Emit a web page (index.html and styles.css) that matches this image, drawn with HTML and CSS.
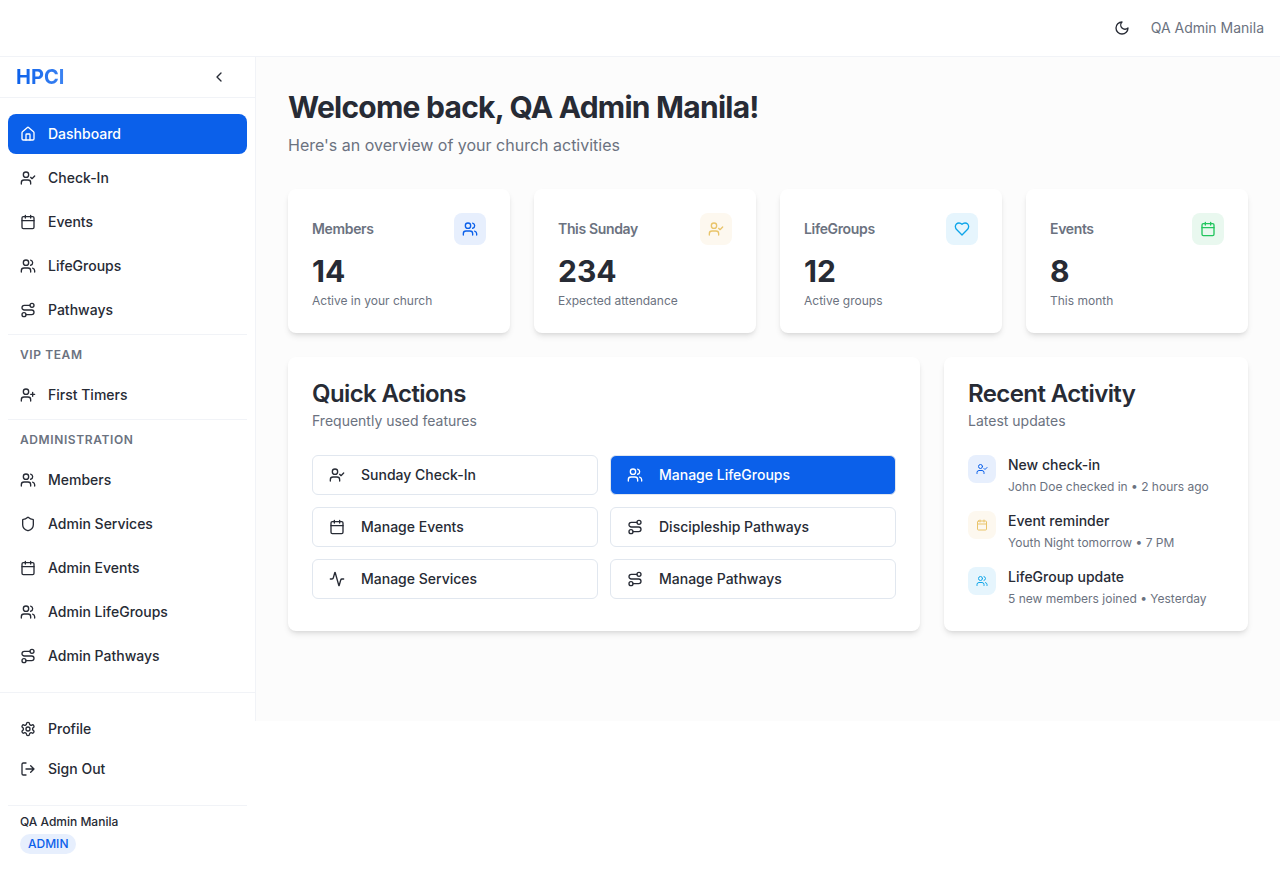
FILE: index.html
```html
<!DOCTYPE html>
<html lang="en">
<head>
<meta charset="utf-8">
<title>HPCI Dashboard</title>
<link rel="stylesheet" href="styles.css">
</head>
<body>
<svg class="sprite" aria-hidden="true">
  <symbol id="home" viewBox="0 0 24 24"><path d="M15 21v-8a1 1 0 0 0-1-1h-4a1 1 0 0 0-1 1v8"/><path d="M3 10a2 2 0 0 1 .709-1.528l7-5.999a2 2 0 0 1 2.582 0l7 5.999A2 2 0 0 1 21 10v9a2 2 0 0 1-2 2H5a2 2 0 0 1-2-2z"/></symbol>
  <symbol id="user-check" viewBox="0 0 24 24"><path d="m16 11 2 2 4-4"/><path d="M16 21v-2a4 4 0 0 0-4-4H6a4 4 0 0 0-4 4v2"/><circle cx="9" cy="7" r="4"/></symbol>
  <symbol id="user-plus" viewBox="0 0 24 24"><path d="M16 21v-2a4 4 0 0 0-4-4H6a4 4 0 0 0-4 4v2"/><circle cx="9" cy="7" r="4"/><path d="M19 8v6M22 11h-6"/></symbol>
  <symbol id="calendar" viewBox="0 0 24 24"><path d="M8 2v4M16 2v4"/><rect width="18" height="18" x="3" y="4" rx="2"/><path d="M3 10h18"/></symbol>
  <symbol id="users" viewBox="0 0 24 24"><path d="M16 21v-2a4 4 0 0 0-4-4H6a4 4 0 0 0-4 4v2"/><circle cx="9" cy="7" r="4"/><path d="M22 21v-2a4 4 0 0 0-3-3.87M16 3.13a4 4 0 0 1 0 7.75"/></symbol>
  <symbol id="route" viewBox="0 0 24 24"><circle cx="6" cy="19" r="3"/><path d="M9 19h8.5a3.5 3.5 0 0 0 0-7h-11a3.5 3.5 0 0 1 0-7H15"/><circle cx="18" cy="5" r="3"/></symbol>
  <symbol id="shield" viewBox="0 0 24 24"><path d="M20 13c0 5-3.5 7.5-7.66 8.95a1 1 0 0 1-.67-.01C7.5 20.5 4 18 4 13V6a1 1 0 0 1 1-1c2 0 4.5-1.2 6.24-2.72a1.17 1.17 0 0 1 1.52 0C14.51 3.81 17 5 19 5a1 1 0 0 1 1 1z"/></symbol>
  <symbol id="settings" viewBox="0 0 24 24"><path d="M12.22 2h-.44a2 2 0 0 0-2 2v.18a2 2 0 0 1-1 1.73l-.43.25a2 2 0 0 1-2 0l-.15-.08a2 2 0 0 0-2.73.73l-.22.38a2 2 0 0 0 .73 2.73l.15.1a2 2 0 0 1 1 1.72v.51a2 2 0 0 1-1 1.74l-.15.09a2 2 0 0 0-.73 2.73l.22.38a2 2 0 0 0 2.73.73l.15-.08a2 2 0 0 1 2 0l.43.25a2 2 0 0 1 1 1.73V20a2 2 0 0 0 2 2h.44a2 2 0 0 0 2-2v-.18a2 2 0 0 1 1-1.73l.43-.25a2 2 0 0 1 2 0l.15.08a2 2 0 0 0 2.73-.73l.22-.39a2 2 0 0 0-.73-2.73l-.15-.08a2 2 0 0 1-1-1.74v-.5a2 2 0 0 1 1-1.74l.15-.09a2 2 0 0 0 .73-2.73l-.22-.38a2 2 0 0 0-2.73-.73l-.15.08a2 2 0 0 1-2 0l-.43-.25a2 2 0 0 1-1-1.73V4a2 2 0 0 0-2-2z"/><circle cx="12" cy="12" r="3"/></symbol>
  <symbol id="log-out" viewBox="0 0 24 24"><path d="M9 21H5a2 2 0 0 1-2-2V5a2 2 0 0 1 2-2h4M16 17l5-5-5-5M21 12H9"/></symbol>
  <symbol id="chevron" viewBox="0 0 24 24"><path d="m15 18-6-6 6-6"/></symbol>
  <symbol id="moon" viewBox="0 0 24 24"><path d="M12 3a6 6 0 0 0 9 9 9 9 0 1 1-9-9Z"/></symbol>
  <symbol id="heart" viewBox="0 0 24 24"><path d="M19 14c1.49-1.46 3-3.21 3-5.5A5.5 5.5 0 0 0 16.5 3c-1.76 0-3 .5-4.5 2-1.5-1.5-2.74-2-4.5-2A5.5 5.5 0 0 0 2 8.500c0 2.3 1.5 4.050 3 5.500l7 7Z"/></symbol>
  <symbol id="activity" viewBox="0 0 24 24"><path d="M22 12h-2.480a2 2 0 0 0-1.930 1.460l-2.350 8.360a.25.25 0 0 1-.48 0L9.240 2.180a.25.25 0 0 0-.48 0l-2.350 8.360A2 2 0 0 1 4.490 12H2"/></symbol>
</svg>

<header class="topbar">
  <svg class="icon"><use href="#moon"/></svg>
  <span class="topbar-user">QA Admin Manila</span>
</header>

<div class="shell">
  <aside class="sidebar">
    <div class="brand"><span class="brand-name">HPCI</span><svg class="icon"><use href="#chevron"/></svg></div>
    <nav class="nav">
      <a class="nav-item active"><svg class="icon"><use href="#home"/></svg>Dashboard</a>
      <a class="nav-item"><svg class="icon"><use href="#user-check"/></svg>Check-In</a>
      <a class="nav-item"><svg class="icon"><use href="#calendar"/></svg>Events</a>
      <a class="nav-item"><svg class="icon"><use href="#users"/></svg>LifeGroups</a>
      <a class="nav-item"><svg class="icon"><use href="#route"/></svg>Pathways</a>
      <div class="nav-label">VIP TEAM</div>
      <a class="nav-item"><svg class="icon"><use href="#user-plus"/></svg>First Timers</a>
      <div class="nav-label">ADMINISTRATION</div>
      <a class="nav-item"><svg class="icon"><use href="#users"/></svg>Members</a>
      <a class="nav-item"><svg class="icon"><use href="#shield"/></svg>Admin Services</a>
      <a class="nav-item"><svg class="icon"><use href="#calendar"/></svg>Admin Events</a>
      <a class="nav-item"><svg class="icon"><use href="#users"/></svg>Admin LifeGroups</a>
      <a class="nav-item"><svg class="icon"><use href="#route"/></svg>Admin Pathways</a>
    </nav>
    <div class="account">
      <a class="nav-item"><svg class="icon"><use href="#settings"/></svg>Profile</a>
      <a class="nav-item"><svg class="icon"><use href="#log-out"/></svg>Sign Out</a>
      <div class="identity"><span class="identity-name">QA Admin Manila</span><span class="role">ADMIN</span></div>
    </div>
  </aside>

  <main class="main">
    <h1 class="title">Welcome back, QA Admin Manila!</h1>
    <p class="subtitle">Here's an overview of your church activities</p>

    <section class="stats">
      <div class="card">
        <div class="stat-head"><span class="stat-label">Members</span><span class="tile blue"><svg class="icon"><use href="#users"/></svg></span></div>
        <div class="stat-value">14</div><div class="stat-note">Active in your church</div>
      </div>
      <div class="card">
        <div class="stat-head"><span class="stat-label">This Sunday</span><span class="tile amber"><svg class="icon"><use href="#user-check"/></svg></span></div>
        <div class="stat-value">234</div><div class="stat-note">Expected attendance</div>
      </div>
      <div class="card">
        <div class="stat-head"><span class="stat-label">LifeGroups</span><span class="tile sky"><svg class="icon"><use href="#heart"/></svg></span></div>
        <div class="stat-value">12</div><div class="stat-note">Active groups</div>
      </div>
      <div class="card">
        <div class="stat-head"><span class="stat-label">Events</span><span class="tile green"><svg class="icon"><use href="#calendar"/></svg></span></div>
        <div class="stat-value">8</div><div class="stat-note">This month</div>
      </div>
    </section>

    <div class="panels">
      <section class="card">
        <h2 class="card-title">Quick Actions</h2>
        <p class="card-desc">Frequently used features</p>
        <div class="actions">
          <a class="action"><svg class="icon"><use href="#user-check"/></svg>Sunday Check-In</a>
          <a class="action primary"><svg class="icon"><use href="#users"/></svg>Manage LifeGroups</a>
          <a class="action"><svg class="icon"><use href="#calendar"/></svg>Manage Events</a>
          <a class="action"><svg class="icon"><use href="#route"/></svg>Discipleship Pathways</a>
          <a class="action"><svg class="icon"><use href="#activity"/></svg>Manage Services</a>
          <a class="action"><svg class="icon"><use href="#route"/></svg>Manage Pathways</a>
        </div>
      </section>
      <section class="card">
        <h2 class="card-title">Recent Activity</h2>
        <p class="card-desc">Latest updates</p>
        <div class="feed">
          <div class="entry"><span class="tile small blue"><svg class="icon"><use href="#user-check"/></svg></span><div><div class="entry-title">New check-in</div><div class="entry-note">John Doe checked in • 2 hours ago</div></div></div>
          <div class="entry"><span class="tile small amber"><svg class="icon"><use href="#calendar"/></svg></span><div><div class="entry-title">Event reminder</div><div class="entry-note">Youth Night tomorrow • 7 PM</div></div></div>
          <div class="entry"><span class="tile small sky"><svg class="icon"><use href="#users"/></svg></span><div><div class="entry-title">LifeGroup update</div><div class="entry-note">5 new members joined • Yesterday</div></div></div>
        </div>
      </section>
    </div>
  </main>
</div>
</body>
</html>
```

FILE: styles.css
```css
* { box-sizing: border-box; }
body {
  margin: 0;
  background: #fff;
  color: #272b35;
  font: 14px/20px Inter, sans-serif;
  overflow: hidden;
}
h1, h2, p { margin: 0; }
.sprite { display: none; }
.icon {
  width: 16px;
  height: 16px;
  flex: none;
  fill: none;
  stroke: currentColor;
  stroke-width: 2;
  stroke-linecap: round;
  stroke-linejoin: round;
}

.topbar {
  height: 57px;
  padding: 0 16px;
  display: flex;
  align-items: center;
  justify-content: flex-end;
  gap: 20.5px;
  border-bottom: 1px solid #f1f3f7;
}
.topbar-user { color: #6b7280; }

.shell { display: flex; align-items: flex-start; height: 822px; }
.sidebar { width: 256px; flex: none; }
.brand {
  height: 41px;
  padding: 0 29px 0 16px;
  display: flex;
  align-items: center;
  justify-content: space-between;
  border-bottom: 1px solid #f1f3f7;
}
.brand-name {
  font-size: 20px;
  line-height: 28px;
  font-weight: 700;
  color: transparent;
  background: linear-gradient(90deg, #0b60ea, #3c83f2);
  background-clip: text;
  -webkit-background-clip: text;
}
.nav {
  padding: 16px 8px;
  display: flex;
  flex-direction: column;
  gap: 4px;
}
.nav-item {
  height: 40px;
  padding: 0 12px;
  display: flex;
  align-items: center;
  gap: 12px;
  border-radius: 8px;
  font-weight: 500;
}
.nav .nav-item { width: 239px; }
.active { background: #0b60ea; color: #fff; }
.nav-label {
  width: 239px;
  height: 41px;
  margin-bottom: -4px;
  padding: 12px 12px;
  border-top: 1px solid #f1f3f7;
  font-size: 12px;
  line-height: 16px;
  font-weight: 600;
  letter-spacing: 0.6px;
  color: #6b7280;
}
.account { padding: 16px 8px; border-top: 1px solid #f1f3f7; }
.identity {
  width: 239px;
  margin-top: 16px;
  padding: 8px 12px;
  border-top: 1px solid #f1f3f7;
  display: flex;
  flex-direction: column;
  align-items: flex-start;
  gap: 4px;
  font-size: 12px;
  line-height: 16px;
  font-weight: 500;
}
.role {
  padding: 2px 8px;
  border-radius: 10px;
  background: #e7effd;
  color: #0b60ea;
}

.main {
  flex: 1;
  margin-left: -1px;
  height: 664px;
  padding: 32px;
  border-left: 1px solid #f1f3f7;
  background: #fcfcfc;
}
.title {
  font-size: 30px;
  line-height: 36px;
  font-weight: 700;
  letter-spacing: -0.75px;
}
.subtitle { margin: 8px 0 32px; font-size: 16px; line-height: 24px; color: #6b7280; }
.card {
  padding: 24px;
  border-radius: 8px;
  background: #fff;
  box-shadow: 0 4px 6px -1px rgba(0, 0, 0, .1), 0 2px 4px -2px rgba(0, 0, 0, .1);
}
.stats { display: grid; grid-template-columns: repeat(4, 1fr); gap: 24px; }
.stat-head { display: flex; align-items: center; justify-content: space-between; }
.stat-label { font-weight: 600; letter-spacing: -0.35px; color: #6b7280; }
.stat-value { margin: 8px 0 4px; font-size: 30px; line-height: 36px; font-weight: 700; }
.stat-note, .entry-note { font-size: 12px; line-height: 16px; color: #6b7280; }
.tile {
  width: 32px;
  height: 32px;
  flex: none;
  display: flex;
  align-items: center;
  justify-content: center;
  border-radius: 8px;
}
.blue { background: #e7effd; color: #0b60ea; }
.amber { background: #fdf8ef; color: #e9c46a; }
.sky { background: #e6f5fd; color: #0ea5e9; }
.green { background: #e9f8ef; color: #22c55e; }
.small { width: 28px; height: 28px; }
.small .icon { width: 12px; height: 12px; }

.panels {
  margin-top: 24px;
  display: grid;
  grid-template-columns: 632px 304px;
  gap: 24px;
}
.card-title { font-size: 24px; line-height: 26px; font-weight: 600; letter-spacing: -0.6px; }
.card-desc { margin: 4px 0 24px; color: #6b7280; }
.actions { display: grid; grid-template-columns: 1fr 1fr; gap: 12px; }
.action {
  height: 40px;
  padding: 0 16px;
  display: flex;
  align-items: center;
  gap: 16px;
  border: 1px solid #e1e7ef;
  border-radius: 6px;
  font-weight: 500;
}
.primary { background: #0b60ea; color: #fff; }
.feed { display: flex; flex-direction: column; gap: 16px; }
.entry { display: flex; gap: 12px; }
.entry-title { margin-bottom: 4px; font-weight: 500; }
```
